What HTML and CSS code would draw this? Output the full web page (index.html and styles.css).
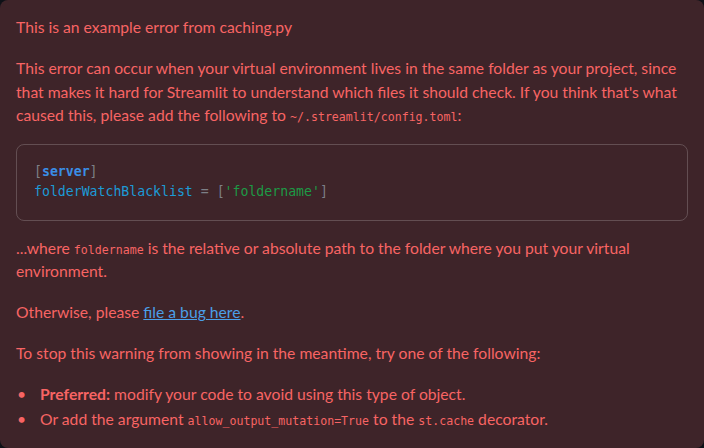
FILE: index.html
```html
<!DOCTYPE html>
<html>
<head>
<meta charset="utf-8">
<link rel="stylesheet" href="styles.css">
</head>
<body>
<div class="alert">
  <p>This is an example error from caching.py</p>
  <p>This error can occur when your virtual environment lives in the same folder as your project, since that makes it hard for Streamlit to understand which files it should check. If you think that's what caused this, please add the following to <code>~/.streamlit/config.toml</code>:</p>
  <pre class="codebox"><span class="pun">[</span><span class="kw">server</span><span class="pun">]</span>
<span class="key">folderWatchBlacklist</span> <span class="pun">=</span> <span class="pun">[</span><span class="str">'foldername'</span><span class="pun">]</span></pre>
  <p>...where <code>foldername</code> is the relative or absolute path to the folder where you put your virtual environment.</p>
  <p>Otherwise, please <a href="#">file a bug here</a>.</p>
  <p>To stop this warning from showing in the meantime, try one of the following:</p>
  <ul>
    <li><strong>Preferred:</strong> modify your code to avoid using this type of object.</li>
    <li>Or add the argument <code>allow_output_mutation=True</code> to the <code>st.cache</code> decorator.</li>
  </ul>
</div>
</body>
</html>
```

FILE: styles.css
```css
html, body {
  margin: 0;
  padding: 0;
  background: #0e1117;
}
.alert {
  box-sizing: border-box;
  width: 704px;
  height: 448px;
  border-radius: 8px;
  background: #3e2429;
  color: #f86464;
  font-family: Lato, "Noto Sans", sans-serif;
  font-size: 15.7px;
  line-height: 23.5px;
  padding: 16px 16px;
  overflow: hidden;
}
p {
  margin: 0 0 17.5px 0;
}
code {
  font-family: "DejaVu Sans Mono", monospace;
  font-size: 11.6px;
  line-height: 1;
}
a {
  color: #4b9fe8;
  text-decoration: underline;
}
.codebox {
  margin: -1.5px 0 16px 0;
  border: 1px solid rgba(250, 250, 250, 0.2);
  border-radius: 8px;
  padding: 17px 17px 18px 17px;
  font-family: "DejaVu Sans Mono", monospace;
  font-size: 13.2px;
  line-height: 20px;
  color: #7d7f86;
}
.pun { color: #7d7f86; }
.kw { color: #3a8ee6; font-weight: bold; }
.key { color: #1c9ad6; }
.str { color: #1d9a45; }
ul {
  margin: 0;
  padding: 0 0 0 24px;
  list-style: none;
}
li {
  margin: 0 0 1px 0;
}
li::before {
  content: "\2022";
  display: inline-block;
  width: 24px;
  margin-left: -24px;
  padding-left: 1px;
  box-sizing: border-box;
}
strong { font-weight: 700; }
```
